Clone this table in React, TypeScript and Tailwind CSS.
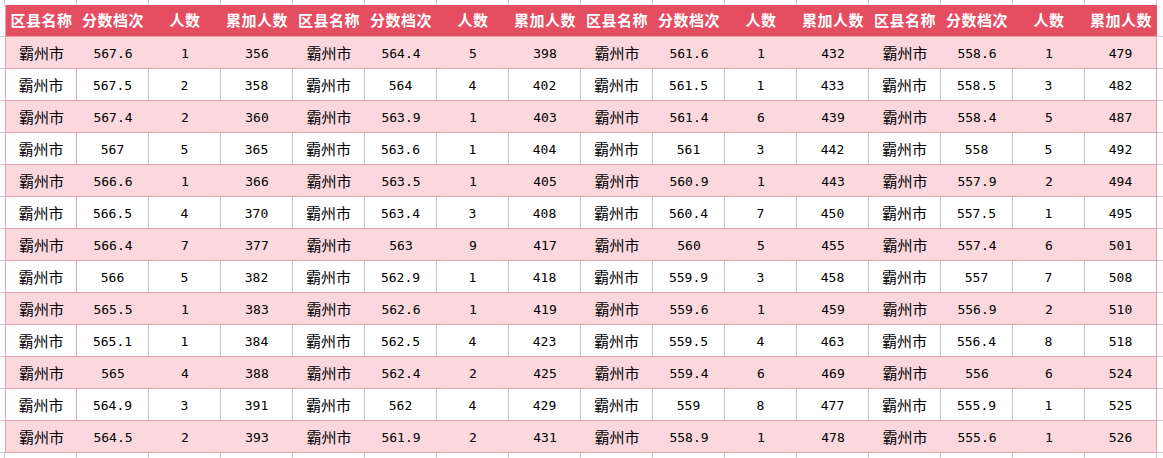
import React from "react";

type Row = [string, string, string];

const groups: Row[][] = [
  [
    ["567.6", "1", "356"], ["567.5", "2", "358"], ["567.4", "2", "360"], ["567", "5", "365"],
    ["566.6", "1", "366"], ["566.5", "4", "370"], ["566.4", "7", "377"], ["566", "5", "382"],
    ["565.5", "1", "383"], ["565.1", "1", "384"], ["565", "4", "388"], ["564.9", "3", "391"],
    ["564.5", "2", "393"],
  ],
  [
    ["564.4", "5", "398"], ["564", "4", "402"], ["563.9", "1", "403"], ["563.6", "1", "404"],
    ["563.5", "1", "405"], ["563.4", "3", "408"], ["563", "9", "417"], ["562.9", "1", "418"],
    ["562.6", "1", "419"], ["562.5", "4", "423"], ["562.4", "2", "425"], ["562", "4", "429"],
    ["561.9", "2", "431"],
  ],
  [
    ["561.6", "1", "432"], ["561.5", "1", "433"], ["561.4", "6", "439"], ["561", "3", "442"],
    ["560.9", "1", "443"], ["560.4", "7", "450"], ["560", "5", "455"], ["559.9", "3", "458"],
    ["559.6", "1", "459"], ["559.5", "4", "463"], ["559.4", "6", "469"], ["559", "8", "477"],
    ["558.9", "1", "478"],
  ],
  [
    ["558.6", "1", "479"], ["558.5", "3", "482"], ["558.4", "5", "487"], ["558", "5", "492"],
    ["557.9", "2", "494"], ["557.5", "1", "495"], ["557.4", "6", "501"], ["557", "7", "508"],
    ["556.9", "2", "510"], ["556.4", "8", "518"], ["556", "6", "524"], ["555.9", "1", "525"],
    ["555.6", "1", "526"],
  ],
];

const headers = ["区县名称", "分数档次", "人数", "累加人数"];
const cjk = { fontFamily: '"Noto Sans CJK SC", "Noto Sans", sans-serif' };
const mono = { fontFamily: '"DejaVu Sans Mono", "Liberation Mono", monospace' };

function GridStrip() {
  return (
    <div className="flex h-[5px]">
      <div className="w-[5px] shrink-0 border-r border-[#c6cbd6]" />
      {Array.from({ length: 16 }).map((_, i) => (
        <div key={i} className="w-[72px] shrink-0 border-r border-[#c6cbd6]" />
      ))}
      <div className="flex-1" />
    </div>
  );
}

export default function App() {
  return (
    <div className="w-[1163px] h-[458px] bg-white overflow-hidden">
      <GridStrip />
      {/* header */}
      <div className="flex h-[32px]">
        <div className="w-[5px] shrink-0 border-b border-[#c6cbd6]" />
        <div className="flex w-[1152px] shrink-0 bg-[#e54d61] border-b border-[#e8a0aa]">
          {Array.from({ length: 16 }).map((_, i) => (
            <div
              key={i}
              className={`w-[72px] shrink-0 flex items-center justify-center text-white font-bold text-[15px] tracking-[0.5px] ${i === 0 ? "border-l border-[#e8a0aa]" : ""}`}
              style={cjk}
            >
              {headers[i % 4]}
            </div>
          ))}
        </div>
        <div className="flex-1 border-b border-[#c6cbd6]" />
      </div>
      {Array.from({ length: 13 }).map((_, r) => {
        const pink = r % 2 === 0;
        return (
          <div key={r} className="flex h-[32px]">
            <div className="w-[5px] shrink-0 border-b border-[#c6cbd6]" />
            <div
              className={`flex w-[1152px] shrink-0 border-b border-[#e8a0aa] ${pink ? "bg-[#fad8de]" : "bg-white"}`}
            >
              {groups.map((g, gi) =>
                [0, 1, 2, 3].map((ci) => {
                  const idx = gi * 4 + ci;
                  const border =
                    idx === 15
                      ? "border-r border-[#e8a0aa]"
                      : pink
                      ? ""
                      : "border-r border-[#c6cbd6]";
                  const left = idx === 0 ? "border-l border-[#e8a0aa]" : "";
                  const text = ci === 0 ? "霸州市" : g[r][ci - 1];
                  return (
                    <div
                      key={idx}
                      className={`w-[72px] shrink-0 flex items-center justify-center pt-[2px] text-black ${ci === 0 ? "text-[15px]" : "text-[13px]"} ${border} ${left}`}
                      style={ci === 0 ? cjk : mono}
                    >
                      {text}
                    </div>
                  );
                })
              )}
            </div>
            <div className="flex-1 border-b border-[#c6cbd6]" />
          </div>
        );
      })}
      <GridStrip />
    </div>
  );
}
